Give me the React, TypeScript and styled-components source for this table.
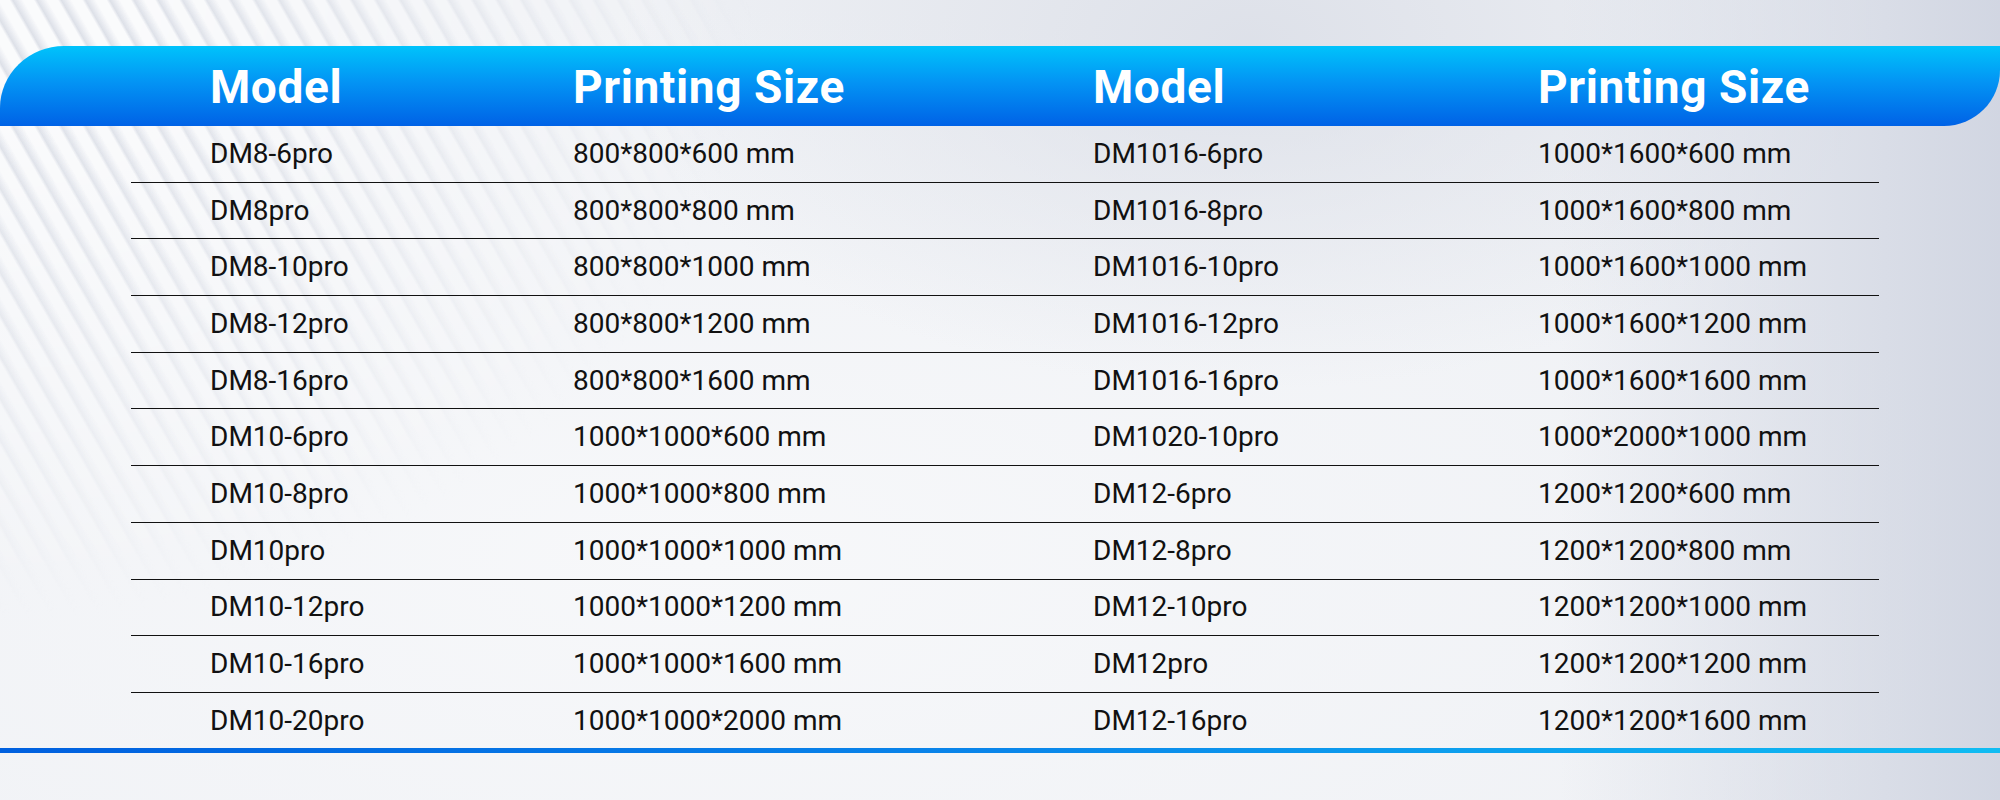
import React from 'react'
import styled, { createGlobalStyle } from 'styled-components'

const rows: [string, string, string, string][] = [
  ['DM8-6pro', '800*800*600 mm', 'DM1016-6pro', '1000*1600*600 mm'],
  ['DM8pro', '800*800*800 mm', 'DM1016-8pro', '1000*1600*800 mm'],
  ['DM8-10pro', '800*800*1000 mm', 'DM1016-10pro', '1000*1600*1000 mm'],
  ['DM8-12pro', '800*800*1200 mm', 'DM1016-12pro', '1000*1600*1200 mm'],
  ['DM8-16pro', '800*800*1600 mm', 'DM1016-16pro', '1000*1600*1600 mm'],
  ['DM10-6pro', '1000*1000*600 mm', 'DM1020-10pro', '1000*2000*1000 mm'],
  ['DM10-8pro', '1000*1000*800 mm', 'DM12-6pro', '1200*1200*600 mm'],
  ['DM10pro', '1000*1000*1000 mm', 'DM12-8pro', '1200*1200*800 mm'],
  ['DM10-12pro', '1000*1000*1200 mm', 'DM12-10pro', '1200*1200*1000 mm'],
  ['DM10-16pro', '1000*1000*1600 mm', 'DM12pro', '1200*1200*1200 mm'],
  ['DM10-20pro', '1000*1000*2000 mm', 'DM12-16pro', '1200*1200*1600 mm'],
]

const App: React.FC = () => {
  return (
    <Page>
      <GlobalStyle />
      <Content>
        <HeaderBand>
          <HeadCell>Model</HeadCell>
          <HeadCell>Printing Size</HeadCell>
          <HeadCell>Model</HeadCell>
          <HeadCell>Printing Size</HeadCell>
        </HeaderBand>
        <Body>
          {rows.map((r, i) => (
            <Row key={i} last={i === rows.length - 1}>
              {r.map((c, j) => (
                <Cell key={j}>{c}</Cell>
              ))}
            </Row>
          ))}
        </Body>
        <BottomLine />
      </Content>
    </Page>
  )
}

export default App

const GlobalStyle = createGlobalStyle`
  html, body {
    margin: 0;
    padding: 0;
  }
  body {
    font-family: Roboto, "Noto Sans", sans-serif;
  }
`

const Page = styled.div`
  position: relative;
  width: 2000px;
  height: 800px;
  overflow: hidden;
  background:
    linear-gradient(90deg, rgba(214, 218, 229, 0) 78%, rgba(206, 211, 224, 0.9) 100%),
    radial-gradient(ellipse 900px 500px at 1250px 40px, rgba(214, 218, 228, 0.7), rgba(214, 218, 228, 0) 70%),
    radial-gradient(ellipse at 35% 70%, #f7f8fa 0%, #eff1f5 70%),
    #eef0f4;

  &::before {
    content: '';
    position: absolute;
    inset: 0;
    background: repeating-linear-gradient(
      60deg,
      rgba(255, 255, 255, 0.7) 0px,
      rgba(255, 255, 255, 0.7) 9px,
      rgba(200, 205, 217, 0.45) 12px,
      rgba(225, 228, 236, 0.3) 16px,
      rgba(255, 255, 255, 0.7) 21px
    );
    -webkit-mask-image: radial-gradient(ellipse 760px 620px at 0 0, #000 15%, transparent 100%);
    mask-image: radial-gradient(ellipse 760px 620px at 0 0, #000 15%, transparent 100%);
  }
`

const Content = styled.div`
  position: relative;
  z-index: 1;
  padding-top: 46px;
`

const HeaderBand = styled.div`
  display: grid;
  grid-template-columns: 363px 520px 445px 1fr;
  align-items: center;
  height: 80px;
  padding-left: 210px;
  box-sizing: border-box;
  background: linear-gradient(180deg, #00c3fb 0%, #0394f4 45%, #0062e6 100%);
  border-top-left-radius: 64px 62px;
  border-bottom-right-radius: 56px 56px;
`

const HeadCell = styled.div`
  color: #ffffff;
  font-size: 46px;
  font-weight: 700;
  letter-spacing: 0.6px;
  line-height: 1;
  padding-top: 2px;
`

const Body = styled.div`
  margin-left: 131px;
  width: 1748px;
`

const Row = styled.div<{ last?: boolean }>`
  display: grid;
  grid-template-columns: 363px 520px 445px 1fr;
  align-items: center;
  height: 56.7px;
  padding-left: 79px;
  box-sizing: border-box;
  border-bottom: ${(p) => (p.last ? 'none' : '1.6px solid #111111')};
`

const Cell = styled.div`
  color: #111111;
  font-size: 28px;
  line-height: 1;
`

const BottomLine = styled.div`
  height: 5px;
  margin-top: -2px;
  background: linear-gradient(90deg, #0060df 0%, #0a86ea 50%, #10bcf2 100%);
`
